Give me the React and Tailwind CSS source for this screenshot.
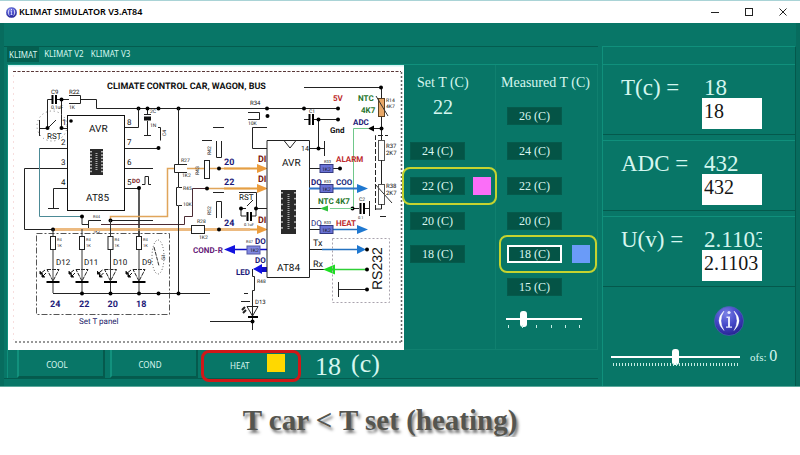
import React from "react";

const DIAGRAM = "[text-rendering:geometricPrecision] font-['Roboto','Liberation_Sans',sans-serif]";
const SERIF = "font-['Liberation_Serif',serif]";
const UI = "font-['Noto_Sans','Open_Sans',sans-serif]";

function InfoBall({ className, id }) {
  return (
    <svg viewBox="0 0 30 30" className={className} aria-hidden="true">
      <defs>
        <radialGradient id={id} cx="0.4" cy="0.25" r="0.8">
          <stop offset="0" stopColor="#7a80e6" />
          <stop offset="0.5" stopColor="#4548c8" />
          <stop offset="1" stopColor="#23208c" />
        </radialGradient>
      </defs>
      <circle cx="15" cy="15" r="14.5" fill={`url(#${id})`} stroke="#4b63b0" strokeWidth="0.7" />
      <path d="M10 5Q0 14.5 10 24.500Q4 14.500 10 5ZM20 5Q30 14.500 20 24.500Q26 14.500 20 5Z" fill="#fff" stroke="#fff" strokeWidth="0.4" />
      <circle cx="15" cy="6.500" r="1.600" fill="#e6e8ff" />
      <path d="M12.500 10.500h3.500v10h2v1.200h-6v-1.200h2v-8.500h-1.500z" fill="#e6e8ff" />
    </svg>
  );
}

function Dot({ x, y }) {
  return <circle cx={x} cy={y} r="2" fill="#000" />;
}

function T({ x, y, s = 8, c = "#111", b, r, children }) {
  return (
    <text x={x} y={y} fontSize={s} fill={c} fontWeight={b ? 700 : 400} transform={r ? `rotate(${r} ${x} ${y})` : undefined}>
      {children}
    </text>
  );
}

function Led({ x, label, lx, value, stem }) {
  return (
    <g>
      <path d={`M${x} ${stem}V236M${x} 249V293`} stroke="#333" />
      <rect x={x - 2.5} y="236.5" width="5" height="13" fill="#fff" stroke="#222" />
      <path d={`M${x - 6} 269.5H${x + 6}L${x} 281Z`} fill="#fff" stroke="#222" strokeDasharray="4 1" />
      <path d={`M${x} 269V282`} stroke="#444" />
      <path d={`M${x - 6.5} 282H${x + 6.5}`} stroke="#000" strokeWidth="2" />
      <path d={`M${x - 8} 270l-5 4M${x - 7} 273l-4 4M${x - 13} 271v3h3M${x - 11} 274v3h3`} stroke="#111" />
      <T x={x + 4} y="241" s={4}>R4</T>
      <T x={x + 4} y="247" s={4}>1K</T>
      <T x={lx} y="265">{label}</T>
      <T x={x - 3} y="307" s={9} c="#1d1a78" b>{value}</T>
    </g>
  );
}

function ChipPicture({ x, y, w, h }) {
  const pins = [0, 1, 2, 3, 4, 5, 6];
  return (
    <g>
      <rect x={x} y={y} width={w} height={h} fill="#2a2a2a" />
      {pins.map((p) => (
        <g key={p} fill="#b5b5b5">
          <rect x={x} y={y + 2 + (p * (h - 3)) / 7} width="2" height="1.5" />
          <rect x={x + w - 2} y={y + 2 + (p * (h - 3)) / 7} width="2" height="1.5" />
        </g>
      ))}
      <path d={`M${x + w / 2} ${y + 4}v${h - 8}`} stroke="#aaa" strokeWidth="2" strokeDasharray="1 1" />
    </g>
  );
}

function Schematic() {
  return (
    <svg viewBox="8 65 396 285" role="img" aria-label="Climate control schematic" className={`block h-auto w-full bg-white ${DIAGRAM}`}>
      <path d="M8 65.5H404" stroke="#d5f3f4" strokeWidth="2" />
      <g fill="none">
        <path d="M13 71.5H401" stroke="#5a3838" strokeDasharray="3 1.5" />
        <path d="M401.5 72V342" stroke="#666" strokeWidth="1.5" strokeDasharray="2 2" />
        <path d="M15 342H401" stroke="#777" strokeWidth="1.5" strokeDasharray="2 2" />
        <path d="M13.5 75V340" stroke="#f7dede" strokeDasharray="2 4" />
      </g>
      <T x="107" y="89" s={9} b>CLIMATE CONTROL CAR, WAGON, BUS</T>

      {/* supply rail and reset network */}
      <g fill="none" stroke="#222">
        <path d="M47.5 128V99.5H52M56 99.5H69M61.5 99V128.5H67M69 95.5H80.5V103.5H69M81 99.5H96.5V108.5H338M39.5 120V136M39 128.5H47M48 128L56 120" />
        <circle cx="52" cy="126" r="15" stroke="#777" strokeDasharray="1 3" />
        <path d="M52.5 95V104M56 95V104" stroke="#000" strokeWidth="2" />
        <path d="M147.5 108V115M144 114.5H151M147.5 121V135.5M144 135.5H151M158 127.5H160.5V140.5" />
        <path d="M144 118.5H151" strokeWidth="4" stroke="#111" />
      </g>
      <T x="51" y="94" s={6}>C9</T>
      <T x="51" y="109" s={5}>0,1uF</T>
      <T x="69" y="94" s={6}>R22</T>
      <T x="69" y="109" s={5}>1K</T>
      <T x="47" y="139" s={8}>RST</T>
      <T x="150" y="113" s={5}>2C</T>
      <T x="150" y="127" s={5}>1N</T>
      <T x="166" y="136" s={5} r={-90}>C4</T>
      <Dot x={47.5} y={128} /><Dot x={61.5} y={99.5} /><Dot x={61.5} y={128} />
      {[138.5, 147.5, 158.5, 178.5, 267, 304, 338].map((x) => <Dot key={x} x={x} y={108.5} />)}

      {/* AT85 controller */}
      <g fill="none" stroke="#222">
        <path d="M139 188V236" strokeWidth="1.5" />
        <path d="M124 127.5H138.5V108M124 148.5H158M124 168.5H153M124 188.5H139M39 148.5H67M67 168.5H24.5V229.5H53M67 188.5H53.5V208M48 208.5H59" />
        <path d="M39.5 148V216.5H82" stroke="#4c8a96" />
        <path d="M82 216V224.5H88M101 220.5H88.5V228.5H101M110 220.5H153" />
        <path d="M101 224.5H184.5V216.5H192.5V188.5H207" stroke="#4b2b33" />
        <path d="M142 184.5H145V176.5H148.5V184.5H151" />
      </g>
      <rect x="67.5" y="115.5" width="57" height="95" fill="#fff" stroke="#111" />
      <circle cx="71" cy="121" r="1.8" />
      <T x="89" y="132" s={10}>AVR</T>
      <T x="86" y="201" s={10}>AT85</T>
      <ChipPicture x={90} y={149} w={13} h={26} />
      {[[62, 125, "1"], [61, 145, "2"], [61, 165, "3"], [61, 185, "4"], [127, 125, "8"], [127, 145, "7"], [127, 165, "6"], [127, 185, "5"]].map(([x, y, n]) => (
        <T key={n} x={x} y={y}>{n}</T>
      ))}
      <T x="132" y="183" s={6} c="#7a1616" b>DO</T>
      <T x="93" y="218" s={4}>R44</T>
      <T x="93" y="233" s={4}>1K2</T>
      <Dot x={158.5} y={148} /><Dot x={139} y={188} />

      {/* digital inputs */}
      <g fill="none" stroke="#e0a55a" strokeWidth="1.5">
        <path d="M110.5 220V216.5H167.5V168.5H174M187 168.5H250M207 188.5H250" />
        <path d="M53 229.5H250" strokeWidth="3" stroke="#ecba80" />
      </g>
      <path d="M257 164l11 4.5-11 4.5zM257 184l11 4.5-11 4.5zM257 225l11 4.5-11 4.5z" fill="#ec9c3c" />
      <path d="M224 168.5H258M224 188.5H258M250 229.5H258" stroke="#e59f45" strokeWidth="2" />
      <g fill="#fff" stroke="#222">
        <path d="M187 164.5H174.5V172.5H187" />
        <rect x="204.5" y="160.5" width="5" height="18" />
        <rect x="191.5" y="225.5" width="13" height="8" />
        <path d="M178.5 108V164M178.5 172V187.5H176.5V205.5H178.5V293M179 187.5H182M179 205.5H182" fill="none" />
        <path d="M213 127.5H224M216.5 141V157.5H221.5V141M202 140.5H212M213 192.5H224M216.5 218V201.5H221.5V218" fill="none" />
      </g>
      <T x="181" y="162" s={5}>R27</T>
      <T x="182" y="177" s={5}>1K2</T>
      <T x="183" y="190" s={5}>R45</T>
      <T x="183" y="206" s={5}>10K</T>
      <T x="211" y="155" s={5} r={-90}>R42</T>
      <T x="199" y="175" s={5} r={-90}>R43</T>
      <T x="211" y="215" s={5} r={-90}>R52</T>
      <T x="197" y="223" s={5}>R28</T>
      <T x="199" y="239" s={5}>1K2</T>
      <T x="224" y="165" s={9} c="#1d1a78" b>20</T>
      <T x="224" y="185" s={9} c="#1d1a78" b>22</T>
      <T x="224" y="226" s={9} c="#1d1a78" b>24</T>
      <T x="258" y="162" s={9} c="#7a1a10" b>DI</T>
      <T x="258" y="182" s={9} c="#7a1a10" b>DI</T>
      <T x="258" y="223" s={9} c="#7a1a10" b>DI</T>
      <Dot x={219} y={168.5} /><Dot x={207} y={188.5} /><Dot x={219} y={229.5} />
      <Dot x={53} y={229.5} /><Dot x={82} y={216.5} /><Dot x={110.5} y={220.5} />

      {/* second reset switch and pull-ups */}
      <g fill="none" stroke="#222">
        <path d="M239 192.5H256.5V208.5H267M241 208.5H246M247 206L253 200M256 208V216H252M246 216H241V208M248 112.5H259.5V119.5H248M267 127.5H252.5V148.5H267M268 140V146" />
        <path d="M247.5 212V221M251 212V221" strokeWidth="2" stroke="#000" />
      </g>
      <T x="239" y="200" s={8}>RST</T>
      <T x="250" y="105" s={6}>R34</T>
      <T x="248" y="125" s={5}>10K</T>
      <T x="244" y="226" s={4}>0.1uF</T>
      <Dot x={241} y={208.5} /><Dot x={256} y={208.5} /><Dot x={267.5} y={116} /><Dot x={269.5} y={144} />

      {/* set panel LEDs */}
      <rect x="36.5" y="233.5" width="133" height="81" fill="none" stroke="#555" strokeDasharray="6 2 2 2" />
      <Led x={53} label="D12" lx={56} value="24" stem={229} />
      <Led x={82} label="D11" lx={84} value="22" stem={229} />
      <Led x={110.5} label="D10" lx={113} value="20" stem={220} />
      <Led x={139} label="D9" lx={142} value="18" stem={229} />
      <path d="M53 293.5H210" stroke="#222" />
      {[82, 110.5, 139, 158.5, 178.5].map((x) => <Dot key={x} x={x} y={293.5} />)}
      <ellipse cx="158" cy="257" rx="6" ry="17" fill="none" stroke="#555" strokeDasharray="1 2" />
      <path d="M154 247L159 266" stroke="#333" strokeDasharray="4 1" />
      <T x="165" y="260" s={5} r={-90}>S1</T>
      <T x="79" y="324" s={8} c="#1d1a6a">Set T panel</T>

      {/* condenser and status LED outputs */}
      <g stroke="#0d0dc8" fill="#1212e0">
        <path d="M234 249.5H247M260 249.5H267" strokeWidth="1.5" />
        <path d="M224 249.5l11-4.5v9zM253 269l9-5v10z" stroke="none" />
        <path d="M262 269.5H267" strokeWidth="5" />
      </g>
      <rect x="247" y="246" width="13" height="8" fill="#8188e0" stroke="#5459a5" />
      <T x="250" y="252" s={5}>1K2</T>
      <T x="246" y="243" s={4}>R47</T>
      <T x="193" y="253" c="#651a78" b>COND-R</T>
      <T x="255" y="244" c="#1d1a78" b>DO</T>
      <T x="255" y="263" c="#1d1a78" b>DO</T>
      <T x="236" y="275" c="#1d1a78" b>LED</T>
      <g fill="none" stroke="#222">
        <path d="M252.5 269V276.5H254.5V290.5H252.5V330M210 321.5H252M247 306.5H258L252.5 316ZM244 293.5H248M241 301.5H250" />
        <path d="M248 317H258" strokeWidth="2" stroke="#000" />
        <path d="M245 307l-3 3M246 310l-3 3" strokeWidth="2" />
      </g>
      <T x="257" y="283" s={5}>R48</T>
      <T x="255" y="304" s={6}>D13</T>
      <Dot x={252.5} y={321.5} />

      {/* AT84 controller */}
      <path d="M267 140.5H309.5V277.5H267ZM284 140.5L290 148L296 140.5" fill="#fff" stroke="#222" />
      <T x="282" y="166" s={10}>AVR</T>
      <T x="277" y="271" s={10}>AT84</T>
      <T x="301" y="151" s={7}>14</T>
      <ChipPicture x={281} y={190} w={15} h={44} />
      <g fill="none" stroke="#222">
        <path d="M304 119.5H309M313 119.5H338M318.5 119V148.5M309 148.5H324M324.5 141V156M304 87.5H381.5V98M381.5 117V140M309 168.5H339M309 188.5H320M309 229.5H320M309 249.5H340M309 269.5H325M309 208.5H322" />
        <path d="M309.5 114V125M313 114V125" stroke="#000" strokeWidth="2" />
      </g>
      <T x="309" y="113" s={5}>C1</T>
      <Dot x={318.5} y={119.5} /><Dot x={338} y={119.5} /><Dot x={318.5} y={148.5} /><Dot x={381} y={87.5} />
      <T x="333" y="101" s={8} c="#bd2a2a" b>5V</T>
      <T x="330" y="133" s={8} b>Gnd</T>
      <T x="358" y="101" s={8} c="#27762b" b>NTC</T>
      <T x="361" y="113" s={8} c="#27762b" b>4K7</T>
      <T x="353" y="125" s={8} c="#1d1a78" b>ADC</T>

      {/* thermistor divider */}
      <rect x="378.5" y="98.5" width="6" height="18" fill="#e8a766" stroke="#5c4020" />
      <path d="M376 96L388 116M375 184L392 203" stroke="#333" />
      <path d="M353.5 208V128.5H368" fill="none" stroke="#6fc78a" />
      <path d="M368 128.5l6-3v6z" />
      <path d="M374 128.5H381" stroke="#222" />
      <Dot x={381.5} y={128.5} />
      <g fill="none" stroke="#222">
        <path d="M375.5 210V135.5H388" strokeDasharray="5 2" />
        <rect x="378.5" y="140.5" width="6" height="20" stroke="#555" />
        <rect x="378.5" y="184.5" width="6" height="20" stroke="#555" />
        <path d="M381.5 160V184M381.5 204V209H376M369.5 201V216M353 208.5H359M364 208.5H369M380 216.5H386" />
        <path d="M360.5 203V214M364 203V214" strokeWidth="2" stroke="#000" />
      </g>
      <T x="386" y="102" s={5}>R14</T>
      <T x="386" y="108" s={5}>4K7</T>
      <T x="386" y="148" s={6}>R37</T>
      <T x="386" y="155" s={6}>2K7</T>
      <T x="386" y="188" s={6}>R38</T>
      <T x="386" y="195" s={6}>2K7</T>
      <T x="359" y="201" s={5}>C2</T>
      <T x="358" y="219" s={4}>0.1</T>
      <Dot x={352.5} y={208.5} />

      {/* AT84 outputs */}
      <path d="M309 188.5H358" stroke="#2e75c8" strokeWidth="2" />
      <path d="M332 229.5H358M322 249.5H358" stroke="#2472c0" strokeWidth="1.5" />
      <path d="M357 184l11 4.5-11 4.5zM357 225l11 4.5-11 4.5zM357 245l9 4.5-9 4.5z" fill="#1f78d0" />
      <path d="M330 208.5H353" stroke="#7bcf92" />
      <path d="M320 208.5l8-3v6z" fill="#2fc23c" />
      <path d="M334 269.5H366" stroke="#2fcf36" strokeWidth="1.5" />
      <path d="M323 269.5l12-5v10z" fill="#1ddf22" />
      <path d="M338.5 282V297M338 289.5H367" stroke="#222" />
      <rect x="332.5" y="238.5" width="57" height="64" fill="none" stroke="#a9a3ad" strokeDasharray="2 2" />
      {[164, 184, 225].map((y) => (
        <g key={y}>
          <rect x="320" y={y + 0.5} width="13" height="8" fill="#6a72d6" stroke="#343a80" />
          <T x="322" y={y + 7} s={5}>1K2</T>
          <T x="324" y={y - 1} s={4}>R33</T>
        </g>
      ))}
      <Dot x={340} y={168.5} /><Dot x={367} y={249.5} /><Dot x={367} y={269.5} /><Dot x={367} y={289.5} />
      <T x="336" y="162" c="#bd2a2a" b>ALARM</T>
      <T x="311" y="185" c="#1d1a78" b>DO</T>
      <T x="336" y="185" c="#1d2f80" b>COO</T>
      <T x="318" y="204" c="#27762b" b>NTC 4K7</T>
      <T x="311" y="226" c="#1d1a78">DO</T>
      <T x="336" y="226" c="#bd2a2a" b>HEAT</T>
      <T x="313" y="246" s={9}>Tx</T>
      <T x="313" y="267" s={9}>Rx</T>
      <g className="font-['Liberation_Sans',sans-serif]">
        <T x="382" y="290" s={14} r={-90}>RS232</T>
      </g>
    </svg>
  );
}

function TempButton({ children, focused }) {
  return (
    <button type="button" className={`block h-[18px] w-[55px] bg-[#045446] text-[12px] leading-[14px] text-[#d9f7f0] ${focused ? "border-2 border-white" : "border border-[#055a4c]"}`}>
      {children}
    </button>
  );
}

function Marked({ children, swatch, wide }) {
  return (
    <div className="relative flex h-[18px] items-center">
      {children}
      <span className={`h-[18px] w-[18px] ${wide ? "ml-[10px]" : "ml-2"} ${swatch}`} />
      <span className={`absolute -top-[10px] -left-2 h-[38px] rounded-lg border-2 border-[#c5d32f] ${wide ? "w-[98px]" : "w-[95px]"}`} />
    </div>
  );
}

function Slider({ label, max, value, ticks }) {
  return (
    <div className="w-full">
      <input
        type="range"
        aria-label={label}
        min="0"
        max={max}
        defaultValue={value}
        className="block h-4 w-full appearance-none bg-transparent [&::-webkit-slider-runnable-track]:h-[2px] [&::-webkit-slider-runnable-track]:bg-white [&::-webkit-slider-thumb]:-mt-[7px] [&::-webkit-slider-thumb]:h-4 [&::-webkit-slider-thumb]:w-[7px] [&::-webkit-slider-thumb]:appearance-none [&::-webkit-slider-thumb]:rounded-[3px] [&::-webkit-slider-thumb]:bg-white"
      />
      <div className="-mt-[2px] flex h-[3px] justify-between px-[2px]">
        {Array.from({ length: ticks }, (_, i) => (
          <span key={i} className="w-px bg-[#c5eee5]" />
        ))}
      </div>
    </div>
  );
}

function Reading({ id, label, value }) {
  return (
    <div className="mb-[5px] flex h-[71px] items-start border-t border-b border-t-[#10907c] border-b-[#04594c] pt-2 pl-[18px]">
      <label htmlFor={id} className="w-[81px] text-[23px] leading-[30px] whitespace-nowrap">{label}</label>
      <div className="w-[60px]">
        <div className="h-[25px] overflow-x-clip pl-[2px] text-[23px] leading-[30px]">{value}</div>
        <input id={id} type="text" defaultValue={value} className="block h-[31px] w-full bg-white pb-1 pl-[2px] text-[20px] text-[#151515]" />
      </div>
    </div>
  );
}

function ModeButton({ children }) {
  return (
    <button type="button" className="flex h-[28px] w-[88px] items-center justify-center border-r-2 border-b-2 border-l-2 border-r-[#055a4d] border-b-[#055a4d] border-l-[#12917d] pt-1 pr-2 text-[8px] text-[#d9f7f0]">
      {children}
    </button>
  );
}

export default function App() {
  return (
    <div className="bg-white">
      <div className="border-b border-[#5ca99c] bg-[#087667] text-[#d5f6ef]">
        <header className="flex h-[23px] items-center border-t border-[#a9d3d6] bg-white pl-[6px] text-black">
          <InfoBall id="ball-small" className="h-[11px] w-[11px]" />
          <h1 className={`ml-[2px] flex-1 text-[9px] font-semibold ${UI}`}>KLIMAT SIMULATOR V3.AT84</h1>
          <button type="button" aria-label="Minimize" className="flex h-full w-[34px] items-center justify-center">
            <svg viewBox="0 0 8 8" className="h-2 w-2" fill="none" stroke="#222"><path d="M0 4.5H8" /></svg>
          </button>
          <button type="button" aria-label="Maximize" className="flex h-full w-[34px] items-center justify-center">
            <svg viewBox="0 0 8 8" className="h-2 w-2" fill="none" stroke="#222"><rect x="0.5" y="0.5" width="7" height="7" /></svg>
          </button>
          <button type="button" aria-label="Close" className="flex h-full w-[34px] items-center justify-center">
            <svg viewBox="0 0 8 8" className="h-2 w-2" fill="none" stroke="#222"><path d="M0.5 0.5L7.5 7.5M7.5 0.5L0.5 7.5" /></svg>
          </button>
        </header>

        <div className="flex border-r-4 border-l-4 border-[#076c5e]">
          <main className="min-w-0 flex-1 pt-[23px]">
            <div className="border-t border-b border-[#045c4f] pl-[3px]">
              <nav className={`flex h-[17px] items-start text-[8px] leading-[14px] ${UI}`}>
                <button type="button" className="h-[15px] bg-[#045f50] px-[2px]">KLIMAT</button>
                <button type="button" className="ml-[3px] px-[2px]">KLIMAT V2</button>
                <button type="button" className="ml-[3px] px-[2px]">KLIMAT V3</button>
              </nav>
              <div className="border-t border-l border-[#10907c]">
                <div className="flex">
                  <div className="min-w-0 flex-1"><Schematic /></div>
                  <section className={`w-[92px] shrink-0 border-r border-b border-[#10806f] pt-[9px] ${SERIF}`}>
                    <h2 className="pl-[13px] text-[14px] leading-[18px]">Set T (C)</h2>
                    <p className="w-[78px] text-center text-[20px] leading-[30px]">22</p>
                    <div className="mt-5 flex flex-col gap-[17px] pl-[6px]">
                      <TempButton>24 (C)</TempButton>
                      <Marked swatch="bg-[#fb6ef8]"><TempButton>22 (C)</TempButton></Marked>
                      <TempButton>20 (C)</TempButton>
                    </div>
                    <div className="mt-[15px] pl-[6px]">
                      <TempButton>18 (C)</TempButton>
                    </div>
                  </section>
                  <section className={`w-[102px] shrink-0 border-r border-b border-[#10806f] pt-[9px] ${SERIF}`}>
                    <h2 className="pl-[5px] text-[14px] leading-[18px] whitespace-nowrap">Measured T (C)</h2>
                    <div className="mt-[15px] flex flex-col gap-[17px] pl-[11px]">
                      <TempButton>26 (C)</TempButton>
                      <TempButton>24 (C)</TempButton>
                      <TempButton>22 (C)</TempButton>
                      <TempButton>20 (C)</TempButton>
                    </div>
                    <div className="mt-[15px] flex flex-col gap-[15px] pl-[11px]">
                      <Marked wide swatch="bg-[#6a9bf8]"><TempButton focused>18 (C)</TempButton></Marked>
                      <TempButton>15 (C)</TempButton>
                    </div>
                    <div className="mt-[15px] w-[86px] pl-[10px]">
                      <Slider label="Measured temperature" max="5" value="1" ticks={6} />
                    </div>
                  </section>
                </div>
                <div className="flex h-[28px] items-start pl-[9px]">
                  <div className={`flex gap-[5px] ${UI}`}>
                    <ModeButton>COOL</ModeButton>
                    <ModeButton>COND</ModeButton>
                    <div className="relative flex">
                      <button type="button" className="flex h-[28px] w-[92px] items-center pl-[27px] text-[8px] text-[#d9f7f0]">
                        <span className="pt-1">HEAT</span>
                        <span className="mb-[2px] ml-[18px] h-[18px] w-[18px] bg-[#ffd800]" />
                      </button>
                      <span className="absolute top-0 -left-[2px] h-[32px] w-[100px] rounded-lg border-[3px] border-[#d01818]" />
                    </div>
                  </div>
                  <p className={`ml-[20px] flex gap-[10px] text-[26px] leading-[28px] ${SERIF}`}>
                    <span className="pt-[3px]">18</span>
                    <span>(c)</span>
                  </p>
                </div>
              </div>
            </div>
            <div className="h-[7px]" />
          </main>

          <aside className={`w-[198px] shrink-0 pt-[23px] pl-1 ${SERIF}`}>
            <div className="h-full border-t border-r border-l border-t-[#10907c] border-r-[#04594c] border-l-[#10907c]">
              <div className="pt-[17px]">
                <Reading id="t" label="T(c) =" value="18" />
                <Reading id="adc" label="ADC =" value="432" />
                <Reading id="u" label="U(v) =" value="2.1103" />
              </div>
              <div className="flex justify-center pt-[14px] pl-[60px]">
                <InfoBall id="ball-large" className="h-[30px] w-[30px]" />
              </div>
              <div className="mt-[13px] flex items-start pl-2">
                <div className="w-[129px]">
                  <Slider label="Offset" max="100" value="50" ticks={42} />
                </div>
                <p className="ml-[10px] text-[11px] leading-[14px] whitespace-nowrap">ofs: <span className="text-[16px]">0</span></p>
              </div>
            </div>
          </aside>
        </div>
      </div>

      <p className={`pt-[16px] pr-[40px] text-center text-[29px] leading-[34px] font-bold text-[#55554f] [text-shadow:2px_3px_3px_#777] ${SERIF}`}>
        T car &lt; T set (heating)
      </p>
    </div>
  );
}
